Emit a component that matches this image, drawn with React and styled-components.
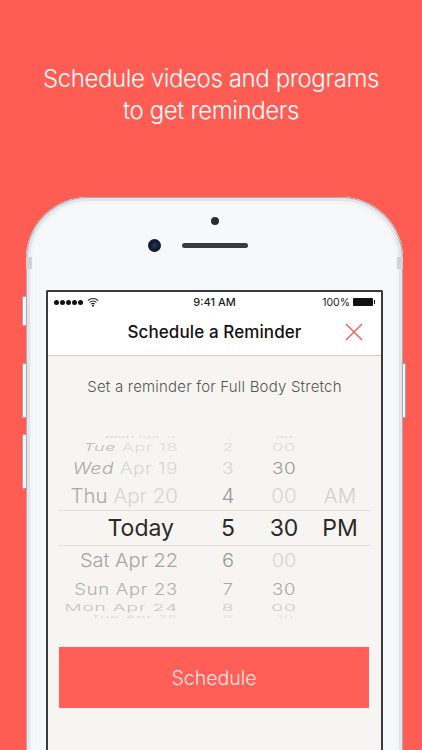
import React from "react";
import styled, { createGlobalStyle } from "styled-components";

const Global = createGlobalStyle`
	html, body {
		margin: 0;
		padding: 0;
		background: #ff5c54;
	}
	* {
		box-sizing: border-box;
	}
`;

const Page = styled.div`
	width: 422px;
	height: 750px;
	overflow: hidden;
	background: #ff5c54;
	font-family: "Inter", "Liberation Sans", sans-serif;
`;

const Headline = styled.h1`
	margin: 0;
	height: 197px;
	padding-top: 63px;
	color: #fff;
	font-size: 24px;
	font-weight: 350;
	line-height: 32px;
	text-align: center;
	letter-spacing: -0.4px;
`;

const Phone = styled.div`
	position: relative;
	width: 377px;
	height: 700px;
	margin-left: 26px;
	padding: 0 20px;
	background: #f7f8fa;
	border-radius: 62px 62px 0 0;
	box-shadow: inset 0 0 0 1px #a9abae, inset 0 0 0 4px #e3e4e7, inset 0 0 0 7px #f3f4f6;
`;

const SideButton = styled.div`
	position: absolute;
	left: -4px;
	top: ${(props) => props.top}px;
	width: 4px;
	height: ${(props) => props.length}px;
	background: #f4f4f6;
	border: 1px solid #a5a7aa;
	border-right: none;
	border-radius: 2px 0 0 2px;
`;

const RightButton = styled(SideButton)`
	left: auto;
	right: -3px;
	width: 3px;
	border: 1px solid #a5a7aa;
	border-left: none;
	border-radius: 0 2px 2px 0;
`;

const Band = styled.div`
	position: absolute;
	top: 60px;
	${(props) => (props.right ? "right: 0;" : "left: 0;")}
	width: 6px;
	height: 12px;
	background: #d2d3d5;
`;

const Bezel = styled.div`
	height: 93px;
	padding-top: 20px;
`;

const Sensor = styled.div`
	width: 8px;
	height: 8px;
	margin: 0 auto 14px;
	border-radius: 50%;
	background: #2c2d30;
`;

const SpeakerRow = styled.div`
	display: grid;
	grid-template-columns: 1fr 66px 1fr;
	align-items: center;
`;

const Camera = styled.div`
	justify-self: end;
	width: 13px;
	height: 13px;
	margin-right: 21px;
	border-radius: 50%;
	background: radial-gradient(circle at 50% 50%, #1f3f78 0, #14203c 35%, #16171b 70%);
`;

const Speaker = styled.div`
	height: 5px;
	border-radius: 3px;
	background: #3a3b3e;
`;

const Screen = styled.div`
	height: 470px;
	border: 2px solid #3b3b3d;
	border-bottom: none;
	border-radius: 2px 2px 0 0;
	background: #f7f5f1;
`;

const StatusBar = styled.div`
	display: grid;
	grid-template-columns: 1fr auto 1fr;
	align-items: center;
	height: 20px;
	padding: 0 6px;
	background: #fff;
	color: #1c1c1c;
	font-size: 11px;
	font-weight: 500;
`;

const Signal = styled.div`
	display: flex;
	align-items: center;
	gap: 1px;
`;

const Dot = styled.span`
	width: 5px;
	height: 5px;
	border-radius: 50%;
	background: #111;
`;

const Wifi = styled.svg`
	width: 12px;
	height: 10px;
	margin-left: 3px;
`;

const BatteryRow = styled.div`
	display: flex;
	align-items: center;
	justify-content: flex-end;
	gap: 3px;
	font-size: 10.5px;
	font-weight: 400;
`;

const Battery = styled.span`
	position: relative;
	width: 20px;
	height: 8px;
	margin-right: 2px;
	border-radius: 1px;
	background: #111;
	&::after {
		content: "";
		position: absolute;
		top: 2px;
		right: -2px;
		width: 1.5px;
		height: 4px;
		background: #111;
	}
`;

const Header = styled.div`
	display: grid;
	grid-template-columns: 1fr auto 1fr;
	align-items: center;
	height: 44px;
	padding: 0 18px 4px;
	background: #fff;
	border-bottom: 1px solid #cfcfcf;
`;

const Title = styled.div`
	grid-column: 2;
	color: #111;
	font-size: 17px;
	font-weight: 500;
	letter-spacing: 0.1px;
`;

const Close = styled.svg`
	justify-self: end;
	width: 18px;
	height: 18px;
`;

const Prompt = styled.p`
	margin: 0;
	height: 80px;
	padding-top: 22px;
	color: #555;
	font-size: 15px;
	font-weight: 300;
	line-height: 18px;
	letter-spacing: 0.2px;
	text-align: center;
`;

const Picker = styled.div`
	height: 182px;
	margin: 0 11px;
	overflow: hidden;
`;

const Row = styled.div`
	display: grid;
	grid-template-columns: 138px 50px 50px 50px;
	grid-template-rows: 100%;
	column-gap: 6px;
	align-items: center;
	height: ${(props) => props.height}px;
	font-size: ${(props) => props.size}px;
	font-weight: ${(props) => (props.selected ? 400 : 300)};
	letter-spacing: ${(props) => props.spacing || 0}px;
	white-space: nowrap;
	color: ${(props) => (props.selected ? "#2a2a2a" : "#aaa")};
	${(props) => props.selected && "border-top: 1px solid #e2e0dc; border-bottom: 1px solid #e2e0dc;"}
`;

const DateCell = styled.div`
	padding-right: ${(props) => (props.selected ? 23 : 19)}px;
	text-align: right;
	transform: scaleY(${(props) => props.squash});
	transform-origin: center;
`;

const Day = styled.span`
	color: ${(props) => props.color};
	font-style: ${(props) => (props.slanted ? "italic" : "normal")};
`;

const Muted = styled.span`
	color: ${(props) => props.color};
`;

const Cell = styled.div`
	text-align: center;
	color: ${(props) => props.color};
	transform: scaleY(${(props) => props.squash});
`;

const ScheduleButton = styled.button`
	display: block;
	width: 310px;
	height: 61px;
	margin: 29px 11px 0;
	padding: 0;
	border: none;
	background: #ff5f57;
	color: #ffe6e2;
	font-family: inherit;
	font-size: 19.5px;
	font-weight: 300;
`;

const rows = [
	{ height: 1, size: 14, squash: 0.35, day: "Mon", date: "Apr 17", dayColor: "#ccc", dateColor: "#ddd", hour: "1", hourColor: "#ddd", min: "30", minColor: "#ccc" },
	{ height: 20, size: 18, squash: 0.6, spacing: 0.6, day: "Tue", date: "Apr 18", slanted: true, dayColor: "#bbb", dateColor: "#ddd", hour: "2", hourColor: "#ddd", min: "00", minColor: "#ddd" },
	{ height: 23, size: 19, squash: 0.8, spacing: 0.5, day: "Wed", date: "Apr 19", slanted: true, dayColor: "#a8a8a8", dateColor: "#d6d6d6", hour: "3", hourColor: "#d4d4d4", min: "30", minColor: "#999" },
	{ height: 30, size: 20.5, squash: 0.95, day: "Thu", date: "Apr 20", dayColor: "#aaa", dateColor: "#d6d6d6", hour: "4", hourColor: "#999", min: "00", minColor: "#d6d6d6", ampm: "AM", ampmColor: "#d0d0d0" },
	{ height: 36, size: 23, squash: 1, selected: true, day: "Today", date: "", dayColor: "#2a2a2a", dateColor: "#2a2a2a", hour: "5", hourColor: "#2a2a2a", min: "30", minColor: "#2a2a2a", ampm: "PM", ampmColor: "#2a2a2a" },
	{ height: 28, size: 20, squash: 0.95, day: "Sat Apr 22", date: "", dayColor: "#a5a5a5", dateColor: "#a5a5a5", hour: "6", hourColor: "#999", min: "00", minColor: "#d6d6d6" },
	{ height: 29, size: 18.5, squash: 0.85, spacing: 0.7, day: "Sun Apr 23", date: "", dayColor: "#b0b0b0", dateColor: "#b0b0b0", hour: "7", hourColor: "#aaa", min: "30", minColor: "#aaa" },
	{ height: 9, size: 19, squash: 0.5, spacing: 0.9, day: "Mon Apr 24", date: "", dayColor: "#c4c4c4", dateColor: "#c4c4c4", hour: "8", hourColor: "#ccc", min: "00", minColor: "#ccc" },
	{ height: 11, size: 15, squash: 0.35, spacing: 1, day: "Tue Apr 25", date: "", dayColor: "#d4d4d4", dateColor: "#d4d4d4", hour: "9", hourColor: "#ddd", min: "30", minColor: "#ddd" },
];

export default function App() {
	return (
		<Page>
			<Global />
			<Headline>
				Schedule videos and programs
				<br />
				to get reminders
			</Headline>
			<Phone>
				<SideButton top={99} length={30} />
				<SideButton top={166} length={55} />
				<SideButton top={237} length={55} />
				<RightButton top={166} length={55} />
				<Band />
				<Band right />
				<Bezel>
					<Sensor />
					<SpeakerRow>
						<Camera />
						<Speaker />
					</SpeakerRow>
				</Bezel>
				<Screen>
					<StatusBar>
						<Signal>
							<Dot />
							<Dot />
							<Dot />
							<Dot />
							<Dot />
							<Wifi viewBox="0 0 12 10">
								<path d="M0.8 3.6a7.4 7.4 0 0 1 10.4 0M2.6 5.4a4.8 4.8 0 0 1 6.8 0M4.3 7.1a2.4 2.4 0 0 1 3.4 0" fill="none" stroke="#222" strokeWidth="1.1" />
								<circle cx="6" cy="8.8" r="1" fill="#222" />
							</Wifi>
						</Signal>
						<span>9:41 AM</span>
						<BatteryRow>
							100%
							<Battery />
						</BatteryRow>
					</StatusBar>
					<Header>
						<Title>Schedule a Reminder</Title>
						<Close viewBox="0 0 18 18">
							<path d="M1 1l16 16M17 1L1 17" fill="none" stroke="#f0625c" strokeWidth="1.5" />
						</Close>
					</Header>
					<Prompt>Set a reminder for Full Body Stretch</Prompt>
					<Picker>
						{rows.map((row) => (
							<Row key={row.hour} height={row.height} size={row.size} spacing={row.spacing} selected={row.selected}>
								<DateCell squash={row.squash} selected={row.selected}>
									<Day color={row.dayColor} slanted={row.slanted}>{row.day}</Day>
									{row.date && " "}
									<Muted color={row.dateColor}>{row.date}</Muted>
								</DateCell>
								<Cell color={row.hourColor} squash={row.squash}>{row.hour}</Cell>
								<Cell color={row.minColor} squash={row.squash}>{row.min}</Cell>
								<Cell color={row.ampmColor} squash={row.squash}>{row.ampm}</Cell>
							</Row>
						))}
					</Picker>
					<ScheduleButton>Schedule</ScheduleButton>
				</Screen>
			</Phone>
		</Page>
	);
}
